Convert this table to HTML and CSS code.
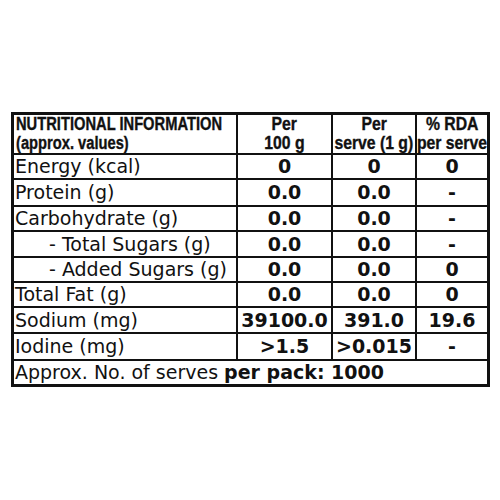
FILE: index.html
```html
<!DOCTYPE html>
<html>
<head>
<meta charset="utf-8">
<link rel="stylesheet" href="styles.css">
</head>
<body>
<div class="nut">
  <div class="cell head left"><span class="hl">NUTRITIONAL INFORMATION</span><span class="hl">(approx. values)</span></div>
  <div class="cell head"><span class="hc">Per</span><span class="hc">100 g</span></div>
  <div class="cell head"><span class="hc">Per</span><span class="hc">serve (1 g)</span></div>
  <div class="cell head"><span class="hc">% RDA</span><span class="hc">per serve</span></div>

  <div class="cell label">Energy (kcal)</div>
  <div class="cell val">0</div>
  <div class="cell val">0</div>
  <div class="cell val">0</div>

  <div class="cell label">Protein (g)</div>
  <div class="cell val">0.0</div>
  <div class="cell val">0.0</div>
  <div class="cell val">-</div>

  <div class="cell label">Carbohydrate (g)</div>
  <div class="cell val">0.0</div>
  <div class="cell val">0.0</div>
  <div class="cell val">-</div>

  <div class="cell label sub">- Total Sugars (g)</div>
  <div class="cell val">0.0</div>
  <div class="cell val">0.0</div>
  <div class="cell val">-</div>

  <div class="cell label sub">- Added Sugars (g)</div>
  <div class="cell val">0.0</div>
  <div class="cell val">0.0</div>
  <div class="cell val">0</div>

  <div class="cell label">Total Fat (g)</div>
  <div class="cell val">0.0</div>
  <div class="cell val">0.0</div>
  <div class="cell val">0</div>

  <div class="cell label">Sodium (mg)</div>
  <div class="cell val">39100.0</div>
  <div class="cell val">391.0</div>
  <div class="cell val">19.6</div>

  <div class="cell label">Iodine (mg)</div>
  <div class="cell val">&gt;1.5</div>
  <div class="cell val">&gt;0.015</div>
  <div class="cell val">-</div>

  <div class="cell label full">Approx. No. of serves&nbsp;<b>per pack: 1000</b></div>
</div>
</body>
</html>
```

FILE: styles.css
```css
html, body {
  margin: 0;
  padding: 0;
  background: #fff;
}

.nut {
  display: grid;
  grid-template-columns: 222px 93px 82px 70px;
  grid-template-rows: 38px 23px 25px 23px 24px 23px 23px 24px 25px 23px;
  gap: 2px;
  width: max-content;
  margin: 112px 0 0 11px;
  border: 3px solid #111;
  background: #111;
  color: #111;
}

.cell {
  background: #fff;
  display: flex;
  align-items: center;
  white-space: nowrap;
  min-width: 0;
}

.head {
  flex-direction: column;
  align-items: center;
  justify-content: flex-start;
  font-family: "Liberation Sans", Arial, sans-serif;
  font-weight: 700;
  font-size: 17.5px;
  line-height: 19px;
  -webkit-text-stroke: 0.35px #111;
}

.head.left {
  align-items: flex-start;
  padding-left: 2px;
}

.hl {
  display: block;
  transform: scaleX(0.84);
  transform-origin: left center;
}

.hc {
  display: block;
  transform: scaleX(0.9);
  transform-origin: center center;
}

.label {
  font-family: "DejaVu Sans", sans-serif;
  font-size: 19px;
  line-height: 1;
  padding-left: 1px;
}

.label.sub {
  padding-left: 35px;
}

.val {
  font-family: "DejaVu Sans", sans-serif;
  font-weight: 700;
  font-size: 19px;
  line-height: 1;
  justify-content: center;
}

.full {
  grid-column: 1 / -1;
}

.full b {
  font-weight: 700;
}
```
